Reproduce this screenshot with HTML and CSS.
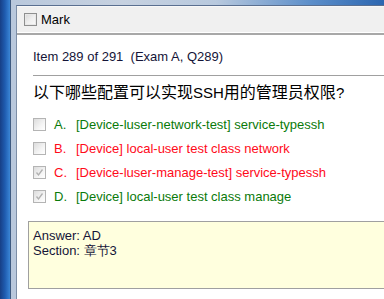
FILE: index.html
```html
<!DOCTYPE html>
<html>
<head>
<meta charset="utf-8">
<link rel="stylesheet" href="styles.css">
</head>
<body>
<div class="screen">
  <div class="desk"></div>
  <div class="frame">
    <div class="app">
      <div class="toolbar">
        <span class="cb cb-mark"></span>
        <span class="mark-label">Mark</span>
      </div>
      <div class="sep"></div>
      <div class="content">
        <div class="item">Item 289 of 291&nbsp; (Exam A, Q289)</div>
        <div class="rule"></div>
        <div class="question">以下哪些配置可以实现<span class="latin">SSH</span>用的管理员权限<span class="latin">?</span></div>
        <div class="options">
          <div class="opt green"><span class="cb"></span><span class="letter">A.</span><span>[Device-luser-network-test] service-typessh</span></div>
          <div class="opt red"><span class="cb"></span><span class="letter">B.</span><span>[Device] local-user test class network</span></div>
          <div class="opt red"><span class="cb checked"><svg width="9" height="9" viewBox="0 0 9 9"><path d="M1.5 4.5 L3.5 7 L7.5 1.5" fill="none" stroke="#b0b0b0" stroke-width="1.3"/></svg></span><span class="letter">C.</span><span>[Device-luser-manage-test] service-typessh</span></div>
          <div class="opt green"><span class="cb checked"><svg width="9" height="9" viewBox="0 0 9 9"><path d="M1.5 4.5 L3.5 7 L7.5 1.5" fill="none" stroke="#b0b0b0" stroke-width="1.3"/></svg></span><span class="letter">D.</span><span>[Device] local-user test class manage</span></div>
        </div>
        <div class="answer">
          <div>Answer: AD</div>
          <div>Section: 章节3</div>
        </div>
      </div>
    </div>
  </div>
</div>
</body>
</html>
```
FILE: styles.css
```css
html, body {
  margin: 0;
  padding: 0;
}
body {
  width: 384px;
  height: 299px;
  overflow: hidden;
  font-family: "Liberation Sans", Arial, sans-serif;
}
.screen {
  display: flex;
  width: 384px;
  height: 299px;
}
.desk {
  width: 10px;
  flex: none;
  background: linear-gradient(to right, #173f86 0%, #1f5cb0 50%, #3b86d6 100%);
}
.frame {
  flex: 1;
  border-left: 1px solid #3e5a80;
  padding: 5px 0 0 5px;
  background: linear-gradient(to right, #b9c8dc 0%, #c6d1e0 30%, #b8c9de 55%, #5d8fca 80%, #2c66b0 100%);
  display: flex;
}
.app {
  flex: 1;
  border-left: 1px solid #7d8ea6;
  border-top: 1px solid #5a6f90;
  background: #fff;
  display: flex;
  flex-direction: column;
}
.toolbar {
  height: 25px;
  background: #f0f0f0;
  border-top: 1px solid #f8f8f8;
  border-bottom: 1px solid #ffffff;
  display: flex;
  align-items: center;
  padding-left: 7px;
}
.sep {
  height: 2px;
  background: #a8a8a8;
}
.cb {
  width: 11px;
  height: 11px;
  border: 1px solid #b4b4b4;
  background: linear-gradient(135deg, #dcdcdc 0%, #f4f4f4 60%, #ffffff 100%);
  flex: none;
  display: flex;
  align-items: center;
  justify-content: center;
}
.cb-mark {
  border-color: #8e8f8f;
  background: linear-gradient(135deg, #d6d6d6 0%, #eeeeee 50%, #fafafa 100%);
  box-shadow: inset 0 0 0 1px #e8e8e8;
}
.mark-label {
  margin-left: 4px;
  font-size: 13px;
  color: #000;
}
.content {
  padding: 14px 0 0 16px;
  flex: 1;
}
.item {
  font-size: 13px;
  line-height: 15px;
  color: #141438;
}
.rule {
  height: 1px;
  background: #a0a0a0;
  margin-top: 11px;
}
.question {
  font-family: "Noto Sans CJK SC", "Liberation Sans", sans-serif;
  font-size: 16px;
  line-height: 20px;
  margin-top: 5px;
  color: #000;
  white-space: nowrap;
}
.question .latin {
  font-family: "Liberation Sans", sans-serif;
  font-size: 15px;
}
.options {
  margin-top: 15px;
  display: flex;
  flex-direction: column;
  gap: 11px;
}
.opt {
  display: flex;
  align-items: center;
  height: 13px;
  font-size: 13px;
  white-space: nowrap;
}
.opt .letter {
  margin-left: 8px;
  width: 22px;
}
.green { color: #0a7a0a; }
.red { color: #ff0a1a; }
.answer {
  margin: 18px 0 0 -5px;
  border: 1px solid #a0a0a0;
  border-right: none;
  background: #ffffde;
  padding: 6px 0 0 4px;
  font-size: 13px;
  line-height: 15px;
  color: #141438;
  box-sizing: border-box;
  height: 68px;
}
```
